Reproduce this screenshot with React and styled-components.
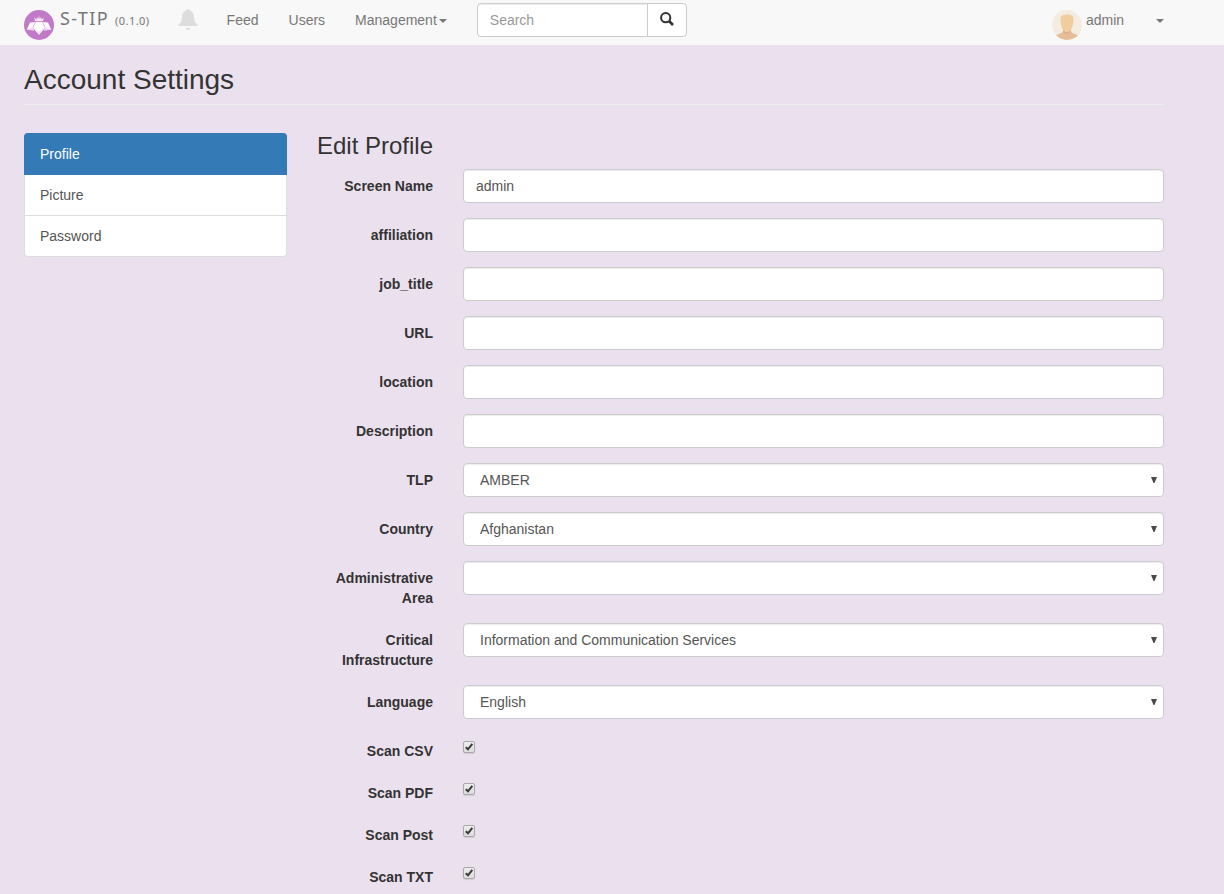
import React from "react";
import styled, { createGlobalStyle, css } from "styled-components";

const GlobalStyle = createGlobalStyle`
  *, *::before, *::after { box-sizing: border-box; }
  html, body { margin: 0; height: 894px; overflow: hidden; }
  body {
    background: #ebe1ee;
    color: #333;
    font: 14px/20px "Liberation Sans", Arial, sans-serif;
  }
  input, select, button { font: inherit; margin: 0; }
`;

const Navbar = styled.nav`
  height: 45px;
  background: #f8f8f8;
  color: #777;
`;

const NavInner = styled.div`
  display: flex;
  align-items: flex-start;
  width: 1144px;
  margin-left: 24px;
`;

const Logo = styled.svg`
  width: 30px;
  height: 30px;
  margin: 10px 6px 0 0;
`;

const Brand = styled.span`
  width: 119px;
  padding-top: 8px;
  font: 18px/20px "Noto Sans", Verdana, sans-serif;
  letter-spacing: 1.4px;
  white-space: nowrap;
`;

const Version = styled.small`
  margin-left: 0;
  font-size: 11px;
  letter-spacing: 0.45px;
`;

const Bell = styled.svg`
  width: 20px;
  height: 22px;
  margin: 9px 28.6px 0 -1px;
`;

const NavLink = styled.a`
  display: flex;
  align-items: center;
  padding-top: 10px;
  margin-right: 30px;
`;

const Caret = styled.span`
  width: 0;
  height: 0;
  margin: ${(p) => p.$margin || "1px 0 0 2px"};
  border-top: 4px solid #777;
  border-left: 4px solid transparent;
  border-right: 4px solid transparent;
`;

const controlBox = css`
  height: 34px;
  background: #fff;
  border: 1px solid #ccc;
  border-radius: 4px;
  box-shadow: inset 0 1px 1px rgba(0, 0, 0, 0.075);
  color: #555;
  outline: none;
`;

const Search = styled.form`
  display: flex;
  width: 210px;
  margin-top: 3px;
`;

const SearchInput = styled.input`
  ${controlBox}
  width: 171px;
  padding: 6px 12px;
  border-radius: 4px 0 0 4px;
  &::placeholder { color: #999; opacity: 1; }
`;

const SearchButton = styled.button`
  display: flex;
  align-items: center;
  justify-content: center;
  width: 40px;
  height: 34px;
  margin-left: -1px;
  padding: 0 0 2px;
  background: #fff;
  border: 1px solid #ccc;
  border-radius: 0 4px 4px 0;
`;

const Account = styled.div`
  display: flex;
  align-items: flex-start;
  margin-left: auto;
  margin-right: 4px;
`;

const Avatar = styled.svg`
  width: 30px;
  height: 30px;
  margin: 10px 4px 0 0;
`;

const UserName = styled.span`
  width: 70px;
  padding-top: 10px;
`;

const Container = styled.main`
  width: 1140px;
  margin-left: 24px;
`;

const PageTitle = styled.h1`
  height: 60px;
  margin: 0 0 28px;
  padding-top: 19px;
  border-bottom: 1px solid #eee;
  font-size: 28px;
  font-weight: 400;
  line-height: 31px;
`;

const Columns = styled.div`
  display: grid;
  grid-template-columns: 263px 1fr;
  column-gap: 30px;
  align-items: start;
`;

const Menu = styled.div`
  display: flex;
  flex-direction: column;
`;

const MenuItem = styled.a`
  height: ${(p) => (p.$active ? 42 : 41)}px;
  padding: ${(p) => (p.$active ? 11 : 10)}px 15px 0;
  background: ${(p) => (p.$active ? "#337ab7" : "#fff")};
  color: ${(p) => (p.$active ? "#fff" : "#555")};
  border: 1px solid ${(p) => (p.$active ? "#337ab7" : "#ddd")};
  border-top: 0;
  &:first-child { border-radius: 4px 4px 0 0; }
  &:last-child { border-radius: 0 0 4px 4px; }
`;

const FormTitle = styled.h2`
  height: 36px;
  margin: 0;
  font-size: 24px;
  font-weight: 400;
  line-height: 26px;
`;

const Row = styled.div`
  display: grid;
  grid-template-columns: 116px 701px;
  column-gap: 30px;
  align-items: start;
  margin-bottom: 15px;
`;

const Label = styled.label`
  padding-top: 7px;
  font-weight: 700;
  text-align: right;
`;

const TextInput = styled.input`
  ${controlBox}
  width: 100%;
  padding: 6px 12px;
`;

const SelectBox = styled.div`
  ${controlBox}
  display: flex;
  align-items: center;
  justify-content: space-between;
  padding: 0 6px 0 16px;
`;

const Arrow = styled.svg`
  width: 6px;
  height: 6px;
  margin-bottom: 1px;
`;

const Check = styled.span`
  display: flex;
  width: 12px;
  height: 12px;
  margin-top: 7px;
  background: linear-gradient(#eee, #dcdcdc);
  border: 1px solid #a9a9a9;
  border-radius: 2px;
  box-shadow: 0 1px 1px rgba(0, 0, 0, 0.1);
`;

const fields = [
  { label: "Screen Name", type: "text", value: "admin" },
  { label: "affiliation", type: "text" },
  { label: "job_title", type: "text" },
  { label: "URL", type: "text" },
  { label: "location", type: "text" },
  { label: "Description", type: "text" },
  { label: "TLP", type: "select", value: "AMBER" },
  { label: "Country", type: "select", value: "Afghanistan" },
  { label: "Administrative Area", type: "select" },
  { label: "Critical Infrastructure", type: "select", value: "Information and Communication Services" },
  { label: "Language", type: "select", value: "English" },
  { label: "Scan CSV", type: "check" },
  { label: "Scan PDF", type: "check" },
  { label: "Scan Post", type: "check" },
  { label: "Scan TXT", type: "check" },
];

function Control({ type, value }) {
  if (type === "text") return <TextInput defaultValue={value} />;
  if (type === "select")
    return (
      <SelectBox role="combobox">
        <span>{value}</span>
        <Arrow viewBox="0 0 6 6"><path d="M0 0H6L3.5 6H2.5Z" fill="#4a4a4a" /></Arrow>
      </SelectBox>
    );
  return (
    <Check role="checkbox" aria-checked="true">
      <svg width="10" height="10" viewBox="0 0 10 10">
        <path d="M1.8 5.2L4 7.3L8.3 1.9" fill="none" stroke="#3c3c3c" strokeWidth="2.1" />
      </svg>
    </Check>
  );
}

function LogoMark() {
  return (
    <Logo viewBox="0 0 30 30">
      <circle cx="15" cy="15" r="15" fill="#c17ac8" />
      <path d="M10.2 7.5L12.5 9.5L13 7L14.2 9L15 5.8L15.8 9L17 7L17.5 9.5L19.8 7.5L19 11.3H11Z" fill="#f3e5f5" />
      <path d="M2.8 19.5L6 12.4L11.3 12L8.7 17.2L9.8 20.5Z" fill="#fbf5fc" />
      <path d="M27.2 19.5L24 12.4L18.7 12L21.3 17.2L20.2 20.5Z" fill="#fbf5fc" />
      <path d="M2.8 19.5L8.8 17.4L9.8 20.5ZM27.2 19.5L21.2 17.4L20.2 20.5Z" fill="#ecd9ef" />
      <path d="M11.7 12H18.3L21 17.8L15 24.8L9 17.8Z" fill="#fff" />
      <path d="M9 17.8L15 21L21 17.8L15 24.8Z" fill="#f3e6f5" />
    </Logo>
  );
}

export default function App() {
  return (
    <>
      <GlobalStyle />
      <Navbar>
        <NavInner>
          <LogoMark />
          <Brand>S-TIP <Version>(0.1.0)</Version></Brand>
          <Bell viewBox="0 0 20 22">
            <path d="M10 0C11 0 11.6 .6 11.8 1.4C15 2.3 16 5 16 8C16 12 17 13.5 19.5 15.5V17H.5V15.5C3 13.5 4 12 4 8C4 5 5 2.3 8.2 1.4C8.4 .6 9 0 10 0Z" fill="#ddd" />
            <path d="M7.7 19H12.3C12 20.3 11 20.8 10 20.8C9 20.8 8 20.3 7.7 19Z" fill="#ddd" />
          </Bell>
          <NavLink>Feed</NavLink>
          <NavLink>Users</NavLink>
          <NavLink>Management<Caret /></NavLink>
          <Search>
            <SearchInput placeholder="Search" />
            <SearchButton type="button" aria-label="Search">
              <svg width="14" height="14" viewBox="0 0 14 14" fill="none" stroke="#333">
                <circle cx="5.7" cy="5.7" r="4.6" strokeWidth="2" />
                <path d="M9 9L13 13" strokeWidth="2.6" />
              </svg>
            </SearchButton>
          </Search>
          <Account>
            <Avatar viewBox="0 0 30 30">
              <defs><clipPath id="avatar-disc"><circle cx="15" cy="15" r="15" /></clipPath></defs>
              <g clipPath="url(#avatar-disc)">
                <path d="M0 0H30V30H0Z" fill="#f5ece1" />
                <path d="M3 26.5C5 23.5 10.5 24 11 21V18H19V21C19.5 24 25 23.5 27 26.5V30H3Z" fill="#e6bd97" />
                <path d="M11 20.5L15 23L19 20.5V22.3L15 23.8L11 22.3Z" fill="#dcae86" />
                <path d="M8.5 9C8.5 5.5 11 4.5 15 4.5C19 4.5 21.5 5.5 21.5 9C21.5 14 20 22 15 22C10 22 8.5 14 8.5 9Z" fill="#f0cc9f" />
              </g>
            </Avatar>
            <UserName>admin</UserName>
            <Caret $margin="19px 0 0" />
          </Account>
        </NavInner>
      </Navbar>
      <Container>
        <PageTitle>Account Settings</PageTitle>
        <Columns>
          <Menu>
            <MenuItem $active>Profile</MenuItem>
            <MenuItem>Picture</MenuItem>
            <MenuItem>Password</MenuItem>
          </Menu>
          <form>
            <FormTitle>Edit Profile</FormTitle>
            {fields.map((f) => (
              <Row key={f.label}>
                <Label>{f.label}</Label>
                <Control {...f} />
              </Row>
            ))}
          </form>
        </Columns>
      </Container>
    </>
  );
}
